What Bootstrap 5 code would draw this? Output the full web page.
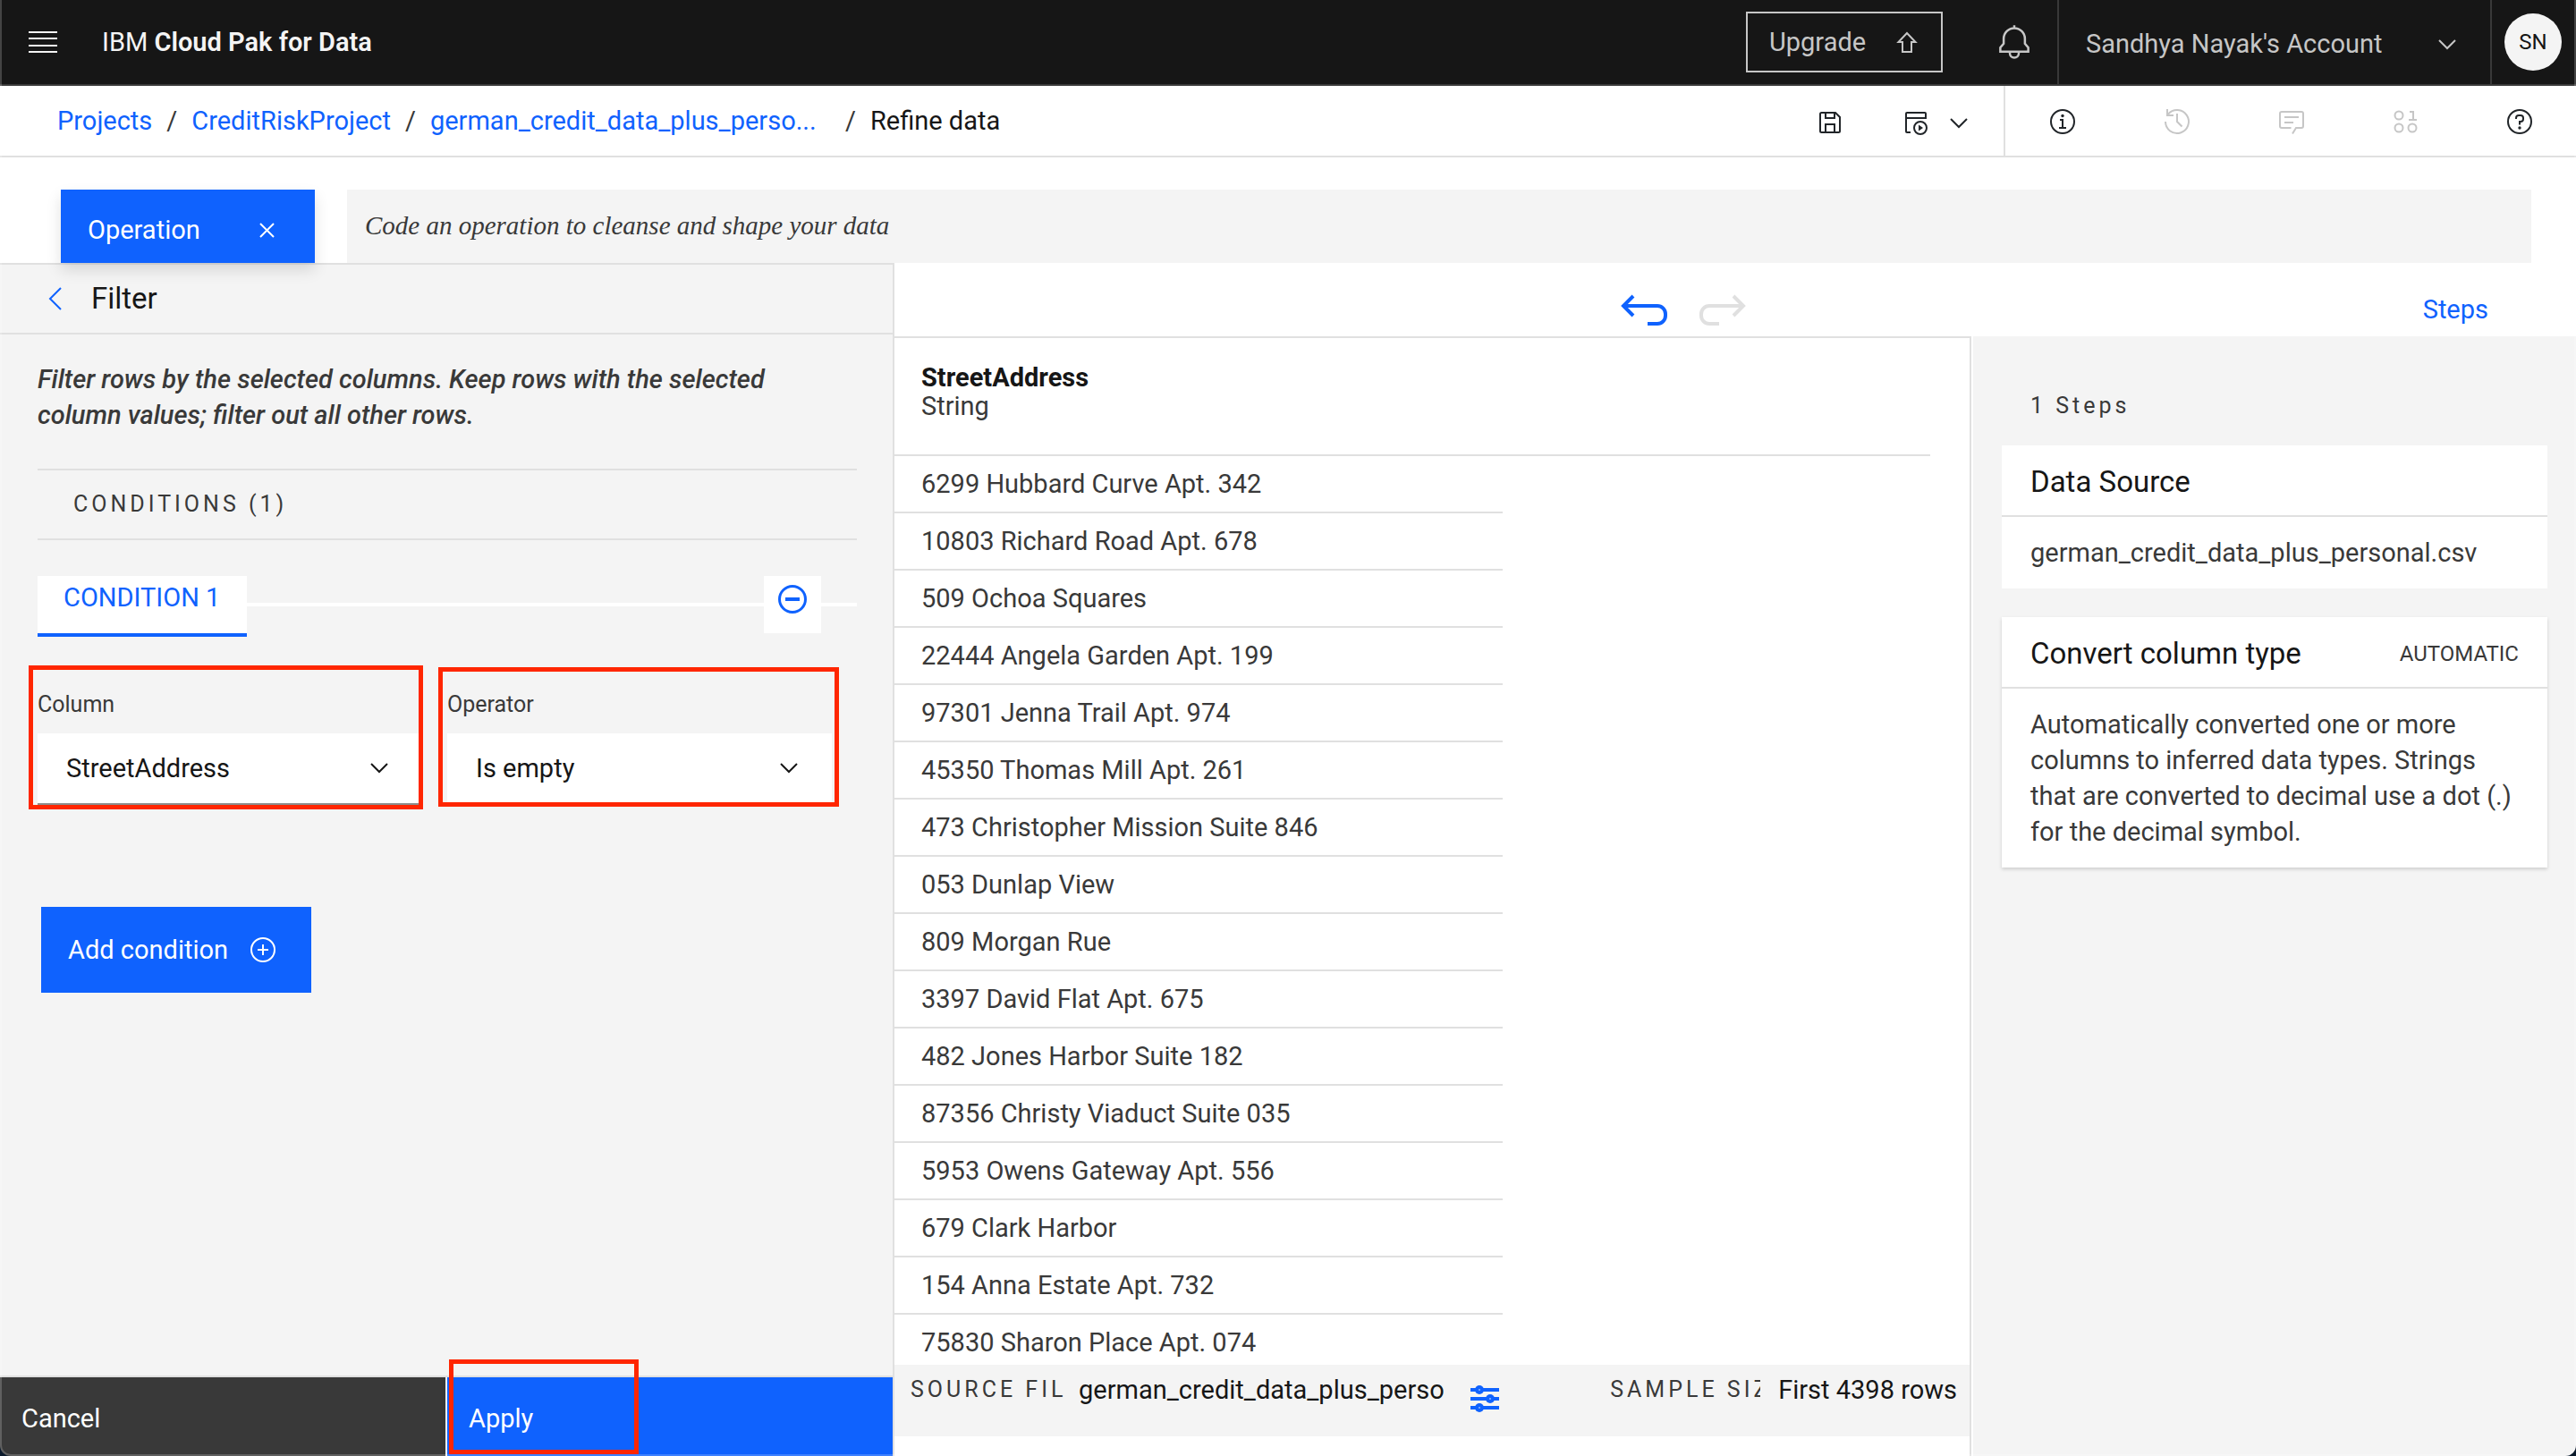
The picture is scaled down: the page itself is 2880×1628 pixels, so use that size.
<!DOCTYPE html>
<html lang="en">
<head>
<meta charset="utf-8">
<meta name="viewport" content="width=device-width, initial-scale=1">
<title>Refine data - IBM Cloud Pak for Data</title>
<link rel="stylesheet" href="https://cdn.jsdelivr.net/npm/bootstrap@5.3.0/dist/css/bootstrap.min.css">
<style>
:root{--blue:#0f62fe;--ink:#161616;--ink2:#393939;--rule:#e0e0e0;--ui:#f4f4f4;--fs:29px;--fs-lg:33px;--fs-md:25px;--fs-sm:24px}
body{font-family:Roboto,"Liberation Sans",sans-serif;font-size:var(--fs);line-height:40px;color:var(--ink);background:#fff;height:100vh;overflow:hidden}
body::after{content:"";position:fixed;inset:0;border:2px solid rgba(255,255,255,.2);border-top:0;border-radius:0 0 12px 12px;box-shadow:0 0 0 12px #0b1a2c;pointer-events:none;z-index:9}
svg{display:block;flex:none;fill:none;stroke:currentColor;stroke-width:2}
.solid{fill:currentColor;stroke:none}
.btn{--bs-btn-font-size:var(--fs);--bs-btn-line-height:40px;--bs-btn-border-radius:0;--bs-btn-border-width:0;--bs-btn-padding-x:0;--bs-btn-padding-y:0}
.btn-primary{--bs-btn-bg:var(--blue);--bs-btn-hover-bg:#0353e9}
a{color:var(--blue);text-decoration:none}
.blue-icon{color:var(--blue)}
.auto-tag{font-size:var(--fs-sm);color:var(--ink2)}
.spaced{font-size:var(--fs-md);letter-spacing:4px;color:var(--ink2)}
.topbar{height:96px;background:var(--ink);border-bottom:2px solid var(--ink2);padding-left:32px;color:#f4f4f4}
.brand{margin-left:50px;color:#f4f4f4}
.brand b{font-weight:600}
.topbar .btn{color:#c6c6c6}
.upgrade{height:68px;border:2px solid #c6c6c6;width:220px;padding:0 22px 0 24px}
.bell{width:128px;height:94px;padding-left:60px}
.account{height:94px;width:484px;border-left:2px solid var(--ink2);padding:4px 32px 0 30px}
.avatar-cell{height:94px;width:96px;border-left:2px solid var(--ink2);padding-left:14px}
.topbar .avatar{width:64px;height:64px;border-radius:50%;background:#f4f4f4;color:var(--ink);font-size:var(--fs-sm)}
.crumbs{height:80px;border-bottom:2px solid var(--rule)}
.crumbs ol{--bs-breadcrumb-item-padding-x:16px;--bs-breadcrumb-divider-color:#393939;padding-left:64px;white-space:nowrap;flex-wrap:nowrap}
.crumbs .breadcrumb-item.active{color:var(--ink)}
.file-crumb a{display:inline-block;min-width:448px}
.tools{padding:4px 34px 0 0;gap:64px}
.info-tools{border-left:2px solid var(--rule);padding-top:2px}
.info-tools .btn{width:128px;height:74px}
.info-tools .btn:disabled{color:#c6c6c6;opacity:1}
.info-tools .btn:last-child{width:126px}
.opbar{padding:36px 50px 0 68px;gap:36px}
.operation{width:284px;height:82px;padding:8px 45px 0 30px;box-shadow:0 8px 16px rgba(0,0,0,.12);z-index:2}
.code-op{border:0;border-radius:0;height:82px;background:var(--ui);padding:0 20px 2px;font:italic var(--fs) "Liberation Serif",serif;color:var(--ink2)}
.code-op::placeholder{color:var(--ink2);opacity:1}
.side{width:1000px;background:var(--ui);border-top:2px solid var(--rule);border-right:2px solid var(--rule)}
.side-head{height:78px;border-bottom:2px solid var(--rule);padding-left:46px;gap:24px}
.side-head h1,.step-head h2{font-size:var(--fs-lg);font-weight:400;margin:0;line-height:40px}
.side-body{padding:30px 40px 0 42px}
.desc{font-style:italic;font-weight:500;color:var(--ink2);margin-bottom:40px;padding-right:64px}
.cond-head{border:solid var(--rule);border-width:2px 0;height:80px;line-height:76px;padding-left:40px;margin:0 0 40px;font-weight:400}
.cond-tab{width:234px;height:68px;background:#fff;border-bottom:4px solid var(--blue);color:var(--blue);padding:4px 0 20px 29px;text-align:left}
.cond-line{height:4px;margin-top:30px;background:#fff}
.cond-line-end{width:40px}
.cond-remove{width:64px;height:64px;background:#fff;color:var(--blue);padding:0 0 12px 16px}
.fields{margin-top:60px;gap:28px}
.field{width:430px}
.field label{display:block;line-height:32px;margin-bottom:16px;font-size:var(--fs-md);color:var(--ink2)}
.field select{height:80px;border:0;border-bottom:2px solid #8d8d8d;border-radius:0;padding:2px 70px 0 32px;font-size:var(--fs);color:var(--ink);background:#fff url("data:image/svg+xml,%3Csvg xmlns='http://www.w3.org/2000/svg' viewBox='0 0 20 12'%3E%3Cpath d='M1 1l9 9 9-9' fill='none' stroke='%23161616' stroke-width='2'/%3E%3C/svg%3E") no-repeat right 38px center/20px 12px}
.callout-box{position:absolute;border:5px solid #ff2600;pointer-events:none;z-index:3}
.callout-column{inset:-28px -1px -5px -10px}
.callout-operator{inset:-26px -8px -2px -10px}
.callout-apply{top:-20px;left:2px;width:212px;height:106px}
.add-cond{width:302px;height:96px;margin:114px 0 0 4px;padding:0 40px 0 30px}
.side-foot{height:90px;border-top:2px solid var(--rule);gap:2px}
.side-foot .btn{width:100%;height:88px;text-align:left;padding:4px 0 0 24px}
.cancel{--bs-btn-bg:#393939;--bs-btn-color:#fff;--bs-btn-hover-bg:#4c4c4c;--bs-btn-hover-color:#fff}
.history{height:82px;padding:22px 98px 0 calc(50% - 130px);gap:32px}
.history svg{stroke-width:4}
.history .btn:disabled{color:var(--rule);opacity:1}
.grid-pane{border:solid var(--rule);border-width:2px 2px 0 0;margin-right:2px}
.rows-wrap{padding-right:44px}
.rows-wrap table{width:100%;border-collapse:separate;border-spacing:0}
.rows-wrap th{height:132px;border-bottom:2px solid var(--rule);vertical-align:top;padding:28px 0 0 30px;line-height:32px;font-weight:400;color:var(--ink2)}
.rows-wrap th b{display:block;color:var(--ink);font-weight:700}
.rows-wrap td{height:64px;padding:0;line-height:62px;color:var(--ink2)}
.rows-wrap td:first-child{width:680px;border-bottom:2px solid var(--rule);padding-left:30px}
.status{height:80px;background:var(--ui);padding:8px 14px 0 18px;margin-bottom:22px;white-space:nowrap}
.clip{overflow:hidden;text-overflow:clip}
.src-label{width:174px;margin-right:14px}
.src-name{width:408px;margin-right:30px}
.sliders{color:var(--blue);margin-top:14px;stroke-width:4}
.size-label{width:168px;margin-right:20px}
.steps{width:674px;background:var(--ui);padding:62px 32px 0}
.steps-count{line-height:32px;margin:0 0 28px 32px}
.step{background:#fff;margin-bottom:32px}
.step:last-child{box-shadow:0 2px 4px rgba(0,0,0,.16)}
.step-head{height:80px;border-bottom:2px solid var(--rule);padding:4px 32px 0}
.step p{padding:20px 32px;margin:0;color:var(--ink2)}
</style>
<script src="https://cdn.jsdelivr.net/npm/bootstrap@5.3.0/dist/js/bootstrap.bundle.min.js"></script>
</head>
<body class="d-flex flex-column">
<header class="topbar d-flex align-items-center flex-shrink-0">
  <button class="btn" aria-label="Menu"><svg width="32" height="24" viewBox="0 0 32 24"><path d="M0 1h32M0 8h32M0 16h32M0 23h32" stroke="#f4f4f4"/></svg></button>
  <a class="brand me-auto" href="#">IBM <b>Cloud Pak for Data</b></a>
  <button class="btn upgrade d-flex align-items-center justify-content-between">Upgrade <svg width="32" height="32" viewBox="0 0 32 32"><path d="M16 6 6.500 16H11v11h10V16h4.500z"/></svg></button>
  <button class="btn bell" aria-label="Notifications"><svg width="40" height="40" viewBox="0 0 32 32"><path d="M16 1v3M3.500 24.500V21l3-3.500V13a9.500 9.500 0 0 1 19 0v4.500l3 3.500v3.500zM12 25v1a4 4 0 0 0 8 0v-1"/></svg></button>
  <button class="btn account d-flex align-items-center justify-content-between">Sandhya Nayak's Account <svg width="32" height="32" viewBox="0 0 32 32"><path d="m7 12 9 9 9-9"/></svg></button>
  <div class="avatar-cell d-flex align-items-center"><button class="btn avatar">SN</button></div>
</header>

<div class="crumbs d-flex flex-shrink-0">
  <nav class="me-auto d-flex align-items-center" aria-label="breadcrumb">
    <ol class="breadcrumb mb-0">
      <li class="breadcrumb-item"><a href="#">Projects</a></li>
      <li class="breadcrumb-item"><a href="#">CreditRiskProject</a></li>
      <li class="breadcrumb-item file-crumb"><a href="#">german_credit_data_plus_perso...</a></li>
      <li class="breadcrumb-item active" aria-current="page">Refine data</li>
    </ol>
  </nav>
  <div class="tools d-flex align-items-center">
    <button class="btn" aria-label="Save"><svg width="32" height="32" viewBox="0 0 32 32"><path d="M5 6.500Q5 5 6.500 5H22l5 5v15.500q0 1.500-1.500 1.500h-19Q5 27 5 25.500zM11 5v6h10V5M11 27V18h10v9"/></svg></button>
    <button class="btn d-flex gap-3" aria-label="Jobs"><svg width="32" height="32" viewBox="0 0 32 32"><path d="M10 27H6q-1 0-1-1V6q0-1 1-1h20q1 0 1 1v5H5"/><circle cx="21" cy="22" r="7"/><path class="solid" d="m19 18.500 5 3.500-5 3.500z"/></svg><svg width="32" height="32" viewBox="0 0 32 32"><path d="m7 12 9 9 9-9"/></svg></button>
  </div>
  <div class="info-tools d-flex align-items-center">
    <button class="btn d-flex align-items-center justify-content-center" aria-label="Information"><svg width="32" height="32" viewBox="0 0 32 32"><circle cx="16" cy="16" r="13"/><path d="M13 14h3v9M12 23h8"/><circle class="solid" cx="16" cy="9.500" r="1.700"/></svg></button>
    <button class="btn d-flex align-items-center justify-content-center" aria-label="History" disabled><svg width="32" height="32" viewBox="0 0 32 32"><path d="M3 16a13 13 0 1 0 3-8.300M5 2v7h7M16 7v9l5.500 5.500"/></svg></button>
    <button class="btn d-flex align-items-center justify-content-center" aria-label="Comments" disabled><svg width="32" height="32" viewBox="0 0 32 32"><path d="M15.500 23H5q-2 0-2-2V7q0-2 2-2h22q2 0 2 2v14q0 2-2 2h-6l-4 6.500M8 11h16M8 17h10"/></svg></button>
    <button class="btn d-flex align-items-center justify-content-center" aria-label="Data preview" disabled><svg width="32" height="32" viewBox="0 0 32 32"><circle cx="8" cy="9" r="4.500"/><circle cx="8" cy="23" r="4.500"/><circle cx="23" cy="23" r="4.500"/><path d="M20 5h4v9M19 14h9"/></svg></button>
    <button class="btn d-flex align-items-center justify-content-center" aria-label="Help"><svg width="32" height="32" viewBox="0 0 32 32"><circle cx="16" cy="16" r="13"/><path d="M12 13v-1q0-3 3-3h2q3 0 3 3v1q0 3-3 3h-1v3.500"/><circle class="solid" cx="16" cy="23" r="1.700"/></svg></button>
  </div>
</div>

<div class="opbar d-flex flex-shrink-0">
  <button class="btn btn-primary operation position-relative d-flex align-items-center justify-content-between flex-shrink-0">Operation <svg width="17" height="17" viewBox="0 0 17 17"><path d="m1 1 15 15M16 1 1 16"/></svg></button>
  <input class="form-control code-op flex-grow-1" type="text" aria-label="Code an operation" placeholder="Code an operation to cleanse and shape your data">
</div>

<main class="d-flex flex-grow-1 overflow-hidden">
  <section class="side d-flex flex-column flex-shrink-0">
    <div class="side-head d-flex align-items-center">
      <button class="btn" aria-label="Back"><svg class="blue-icon" width="32" height="32" viewBox="0 0 32 32"><path d="M22 4 10 16l12 12"/></svg></button>
      <h1>Filter</h1>
    </div>
    <div class="side-body flex-grow-1">
      <p class="desc">Filter rows by the selected columns. Keep rows with the selected column values; filter out all other rows.</p>
      <h2 class="cond-head spaced">CONDITIONS (1)</h2>
      <div class="d-flex align-items-start">
        <button class="btn cond-tab">CONDITION 1</button>
        <div class="cond-line flex-grow-1"></div>
        <button class="btn cond-remove" aria-label="Remove condition"><svg width="32" height="32" viewBox="0 0 32 32"><circle cx="16" cy="16" r="14.500" stroke-width="3"/><path d="M8 16h16" stroke-width="4"/></svg></button>
        <div class="cond-line cond-line-end"></div>
      </div>
      <div class="fields d-flex">
        <div class="field position-relative">
          <label for="column">Column</label>
          <select class="form-select" id="column"><option>StreetAddress</option></select>
          <div class="callout-box callout-column"></div>
        </div>
        <div class="field position-relative">
          <label for="operator">Operator</label>
          <select class="form-select" id="operator"><option>Is empty</option></select>
          <div class="callout-box callout-operator"></div>
        </div>
      </div>
      <button class="btn btn-primary add-cond d-flex align-items-center justify-content-between">Add condition <svg width="28" height="28" viewBox="0 0 28 28"><path d="M14 8v12M8 14h12"/><circle cx="14" cy="14" r="13"/></svg></button>
    </div>
    <div class="side-foot d-flex">
      <div class="flex-fill w-50"><button class="btn cancel">Cancel</button></div>
      <div class="flex-fill w-50 position-relative"><button class="btn btn-primary">Apply</button><div class="callout-box callout-apply"></div></div>
    </div>
  </section>

  <div class="d-flex flex-column flex-grow-1 overflow-hidden">
    <div class="history d-flex align-items-center flex-shrink-0">
      <button class="btn" aria-label="Undo"><svg class="blue-icon" width="56" height="40" viewBox="0 0 56 40"><path d="M16 5 5 16l11 11M5 16h38a9 9 0 0 1 9 9v2a9 9 0 0 1-9 9H32"/></svg></button>
      <button class="btn" aria-label="Redo" disabled><svg width="56" height="40" viewBox="0 0 56 40"><path d="m40 5 11 11-11 11M51 16H13a9 9 0 0 0-9 9v2a9 9 0 0 0 9 9h11"/></svg></button>
      <a class="ms-auto" href="#">Steps</a>
    </div>
    <div class="d-flex flex-grow-1 overflow-hidden">
      <section class="grid-pane d-flex flex-column flex-grow-1 overflow-hidden">
        <div class="rows-wrap flex-grow-1 overflow-hidden">
          <table>
            <thead><tr><th colspan="2"><b>StreetAddress</b>String</th></tr></thead>
            <tbody>
              <tr><td>6299 Hubbard Curve Apt. 342</td><td></td></tr>
              <tr><td>10803 Richard Road Apt. 678</td><td></td></tr>
              <tr><td>509 Ochoa Squares</td><td></td></tr>
              <tr><td>22444 Angela Garden Apt. 199</td><td></td></tr>
              <tr><td>97301 Jenna Trail Apt. 974</td><td></td></tr>
              <tr><td>45350 Thomas Mill Apt. 261</td><td></td></tr>
              <tr><td>473 Christopher Mission Suite 846</td><td></td></tr>
              <tr><td>053 Dunlap View</td><td></td></tr>
              <tr><td>809 Morgan Rue</td><td></td></tr>
              <tr><td>3397 David Flat Apt. 675</td><td></td></tr>
              <tr><td>482 Jones Harbor Suite 182</td><td></td></tr>
              <tr><td>87356 Christy Viaduct Suite 035</td><td></td></tr>
              <tr><td>5953 Owens Gateway Apt. 556</td><td></td></tr>
              <tr><td>679 Clark Harbor</td><td></td></tr>
              <tr><td>154 Anna Estate Apt. 732</td><td></td></tr>
              <tr><td>75830 Sharon Place Apt. 074</td><td></td></tr>
            </tbody>
          </table>
        </div>
        <div class="status d-flex align-items-start flex-shrink-0">
          <span class="spaced clip src-label">SOURCE FILE</span>
          <span class="clip src-name">german_credit_data_plus_personal.csv</span>
          <svg class="sliders me-auto" width="32" height="32" viewBox="0 0 32 32"><path d="M0 6h32M0 16h32M0 26h32"/><g class="solid"><circle cx="10" cy="6" r="5"/><circle cx="22" cy="16" r="5"/><circle cx="10" cy="26" r="5"/></g><g fill="#8db6ff" stroke="none"><circle cx="10" cy="6" r="1"/><circle cx="22" cy="16" r="1"/><circle cx="10" cy="26" r="1"/></g></svg>
          <span class="spaced clip size-label">SAMPLE SIZE</span>
          <span>First 4398 rows</span>
        </div>
      </section>
      <aside class="steps flex-shrink-0">
        <div class="spaced steps-count">1 Steps</div>
        <article class="step">
          <div class="step-head d-flex align-items-center"><h2>Data Source</h2></div>
          <p>german_credit_data_plus_personal.csv</p>
        </article>
        <article class="step">
          <div class="step-head d-flex align-items-center justify-content-between"><h2>Convert column type</h2><span class="auto-tag">AUTOMATIC</span></div>
          <p>Automatically converted one or more columns to inferred data types. Strings that are converted to decimal use a dot (.) for the decimal symbol.</p>
        </article>
      </aside>
    </div>
  </div>
</main>
</body>
</html>
